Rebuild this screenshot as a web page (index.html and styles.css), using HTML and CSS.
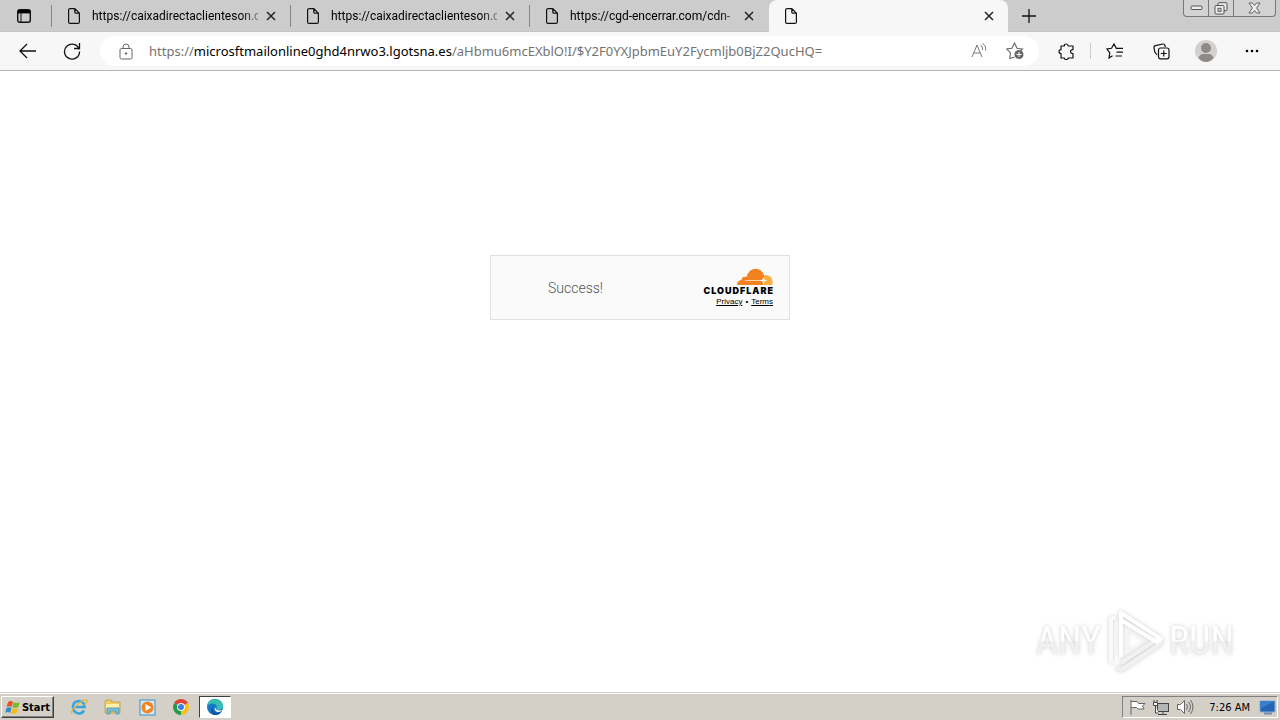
FILE: index.html
```html
<!DOCTYPE html>
<html lang="en">
<head>
<meta charset="utf-8">
<meta name="viewport" content="width=device-width, initial-scale=1">
<title>Browser</title>
<link rel="stylesheet" href="styles.css">
</head>
<body>
<svg class="defs" width="0" height="0" aria-hidden="true">
  <symbol id="page" viewBox="0 0 12 16"><path d="M1.500.6h5.300l4.600 4.600v8.700q0 1.500-1.500 1.500H2q-1.400 0-1.400-1.500V2Q.6.6 2 .6M6.800.8v3.100q0 1.300 1.300 1.300h3.100" fill="none" stroke="#111" stroke-width="1.2"/></symbol>
  <symbol id="close" viewBox="0 0 10 10"><path d="M1 1l8 8M9 1L1 9" fill="none" stroke="#222" stroke-width="1.5"/></symbol>
</svg>
<header class="browser">
  <div class="tabstrip">
    <button class="tab-actions" aria-label="Tab actions"><svg width="14" height="14" viewBox="0 0 14 14"><rect x=".7" y=".7" width="12.6" height="12.6" rx="2" fill="none" stroke="#111" stroke-width="1.4"/><path d="M1 1h12v3.400H1z"/><path d="M4 4v9" stroke="#111"/></svg></button>
    <div class="tab"><svg class="page-icon"><use href="#page"/></svg><span class="tab-title">https://caixadirectaclienteson.c</span><button class="tab-close" aria-label="Close tab"><svg><use href="#close"/></svg></button></div>
    <div class="tab"><svg class="page-icon"><use href="#page"/></svg><span class="tab-title">https://caixadirectaclienteson.c</span><button class="tab-close" aria-label="Close tab"><svg><use href="#close"/></svg></button></div>
    <div class="tab"><svg class="page-icon"><use href="#page"/></svg><span class="tab-title">https://cgd-encerrar.com/cdn-</span><button class="tab-close" aria-label="Close tab"><svg><use href="#close"/></svg></button></div>
    <div class="tab active"><svg class="page-icon"><use href="#page"/></svg><span class="tab-title"></span><button class="tab-close" aria-label="Close tab"><svg><use href="#close"/></svg></button></div>
    <button class="new-tab" aria-label="New tab"><svg width="14" height="14" viewBox="0 0 14 14"><path d="M7 0v14M0 7h14" stroke="#111" stroke-width="1.3"/></svg></button>
    <div class="window-buttons">
      <button aria-label="Minimize"><svg width="13" height="6" viewBox="0 0 13 6"><rect x="1" y="1" width="11" height="3.5" rx="1" fill="#eee" stroke="#555"/></svg></button>
      <button aria-label="Restore"><svg width="14" height="13" viewBox="0 0 14 13"><rect x="4" y=".7" width="9" height="8" rx="1" fill="#e8e8e8" stroke="#555"/><rect x="1" y="3.5" width="9" height="8.5" rx="1" fill="#eee" stroke="#555"/><rect x="4" y="6.3" width="3" height="3" fill="#ddd" stroke="#555"/></svg></button>
      <button class="wide" aria-label="Close"><svg width="13" height="12" viewBox="0 0 13 12"><path d="M1 1h3.400l2.100 2.600L8.600 1H12L8.600 6l3.400 5H8.600L6.500 8.400 4.400 11H1l3.400-5z" fill="#eee" stroke="#666"/></svg></button>
    </div>
  </div>
  <div class="toolbar">
    <button class="nav back" aria-label="Back"><svg width="18" height="16" viewBox="0 0 18 16"><path d="M8 1L1 8l7 7M1 8h16" fill="none" stroke="#111" stroke-width="1.3"/></svg></button>
    <button class="nav reload" aria-label="Refresh"><svg width="18" height="18" viewBox="0 0 18 18"><path d="M16.200 7.500A7.500 7.500 0 1 0 16.500 9.500M16.500 1v5.500H11" fill="none" stroke="#111" stroke-width="1.3"/></svg></button>
    <div class="address">
      <svg width="14" height="17" viewBox="0 0 14 17" fill="none" stroke="#666"><rect x="1" y="5.500" width="12" height="10.500" rx="1.500"/><path d="M4 5.500V4q0-3 3-3t3 3v1.500"/><circle cx="7" cy="10.500" r=".8" fill="#555"/></svg>
      <span class="url">https://<b>microsftmailonline0ghd4nrwo3.lgotsna.es</b>/aHbmu6mcEXblO!I/$Y2F0YXJpbmEuY2Fycmljb0BjZ2QucHQ=</span>
      <button aria-label="Read aloud"><svg width="18" height="18" viewBox="0 0 18 18" fill="none" stroke="#777"><path d="M2 15L7 3l5 12M4 11h6M10.500 3q2.500 1.500 2 5M12.500 1.500q4 2 3 7"/></svg></button>
      <button aria-label="Add to favorites"><svg width="18" height="18" viewBox="0 0 18 18"><path d="M8.500 15l-4.800 1.500.8-5.500L.8 7l5.100-.8L8.500 1l2.500 5.200 5.500.8-2.300 2" fill="none" stroke="#666" stroke-width="1.1"/><circle cx="13" cy="12.500" r="4.500" fill="#666"/><path d="M13 10v5M10.500 12.500h5" stroke="#fff"/></svg></button>
    </div>
    <button class="tool extensions" aria-label="Extensions"><svg width="17" height="17" viewBox="0 0 17 17"><path d="M3 3h3.300Q6.300 1 8.200 1t2 2H15v3.700q-2.500 0-2.500 1.900t2.500 1.900V15h-4.800q0 1.500-2 1.500T6.300 15H3v-4.500Q1 10.500 1 8.600t2-1.900z" fill="none" stroke="#111" stroke-width="1.2" stroke-linejoin="round"/></svg></button>
    <span class="separator"></span>
    <button class="tool favorites" aria-label="Favorites"><svg width="18" height="16" viewBox="0 0 18 16" fill="none" stroke="#111" stroke-width="1.2"><path d="M6.500 12.700L3 15l.8-5.200L1 6l4.500-.7L8 1l2.300 4.300H17M10.500 9.200H17M9.500 13H16"/></svg></button>
    <button class="tool collections" aria-label="Collections"><svg width="17" height="17" viewBox="0 0 17 17" fill="none" stroke="#111" stroke-width="1.200"><path d="M4 12L1.800 9 1 4.500Q.8 3 2.300 2.700L10 1q1.500-.2 2 1.500l.2 1.500"/><rect x="5.500" y="5" width="10.500" height="10.800" rx="2"/><path d="M10.750 7.500v6M7.750 10.500h6"/></svg></button>
    <button class="tool profile" aria-label="Profile"><svg width="22" height="22" viewBox="0 0 22 22"><circle cx="11" cy="11" r="11" fill="#d3d0ce"/><circle cx="11" cy="8" r="5" fill="#8e8a88"/><path d="M3.500 18Q5 14 8 14h6q3 0 4.500 4Q15 22 11 22t-7.500-4" fill="#8e8a88"/></svg></button>
    <button class="tool" aria-label="Settings and more"><svg width="14" height="4" viewBox="0 0 14 4"><circle cx="2" cy="2" r="1.300"/><circle cx="7" cy="2" r="1.300"/><circle cx="12" cy="2" r="1.300"/></svg></button>
  </div>
</header>
<main class="content">
  <section class="challenge">
    <span class="status">Success!</span>
    <div class="brand">
      <svg width="36" height="18" viewBox="0 0 36 18" aria-hidden="true"><path d="M25 17l1-8q2-3 5-1.500 4 1 4.500 6V17z" fill="#fbad41"/><path d="M0 17q-.3-4 4.500-5Q5 8 9.500 9 12 1 18 .7q7-.2 9 6.800l.5 2.500-2 7z" fill="#f48120"/><path d="M8 12.500h20" stroke="#fbd3ae"/><path d="M26.500 9l1 2.500 2.500 1-2.500 1-1 3-1-3-2.500-1 2.500-1z" fill="#fff"/></svg>
      <span class="wordmark">CLOUDFLARE</span>
      <nav class="legal"><a href="#">Privacy</a><span>•</span><a href="#">Terms</a></nav>
    </div>
  </section>
  <div class="watermark"><span>ANY</span><svg width="58" height="64" viewBox="0 0 58 64" fill="none" stroke-width="4" stroke-linejoin="round"><path d="M10 58l5 3 40-27-5-3-35 23" stroke="#f1f1f1"/><path d="M5 54V10l4-2" stroke="#fafafa"/><path d="M15 48V4l40 26-4 3-36-22" stroke="#fff"/><path d="M22 21v23l17-12z" stroke="#f4f4f4" stroke-width="1"/></svg><span>RUN</span></div>
</main>
<footer class="taskbar">
  <button class="start"><svg width="16" height="15" viewBox="0 0 16 15"><path d="M3 2q3-1.800 5 0L6.700 7q-2.500-1.500-5 0z" fill="#e65322"/><path d="M8.700 2.300q3 1.500 6 0L13.300 7q-3 1.600-5.800.3z" fill="#79b829"/><path d="M1.500 8q2.500-1.500 5 0l-1.300 5q-2.500-1.800-5 0z" fill="#3289d2"/><path d="M7.300 8.300q3 1.600 5.800 0L11.700 13q-3 1.800-5.700.3z" fill="#f5bc18"/></svg>Start</button>
  <button class="task" aria-label="Internet Explorer"><svg width="18" height="18" viewBox="0 0 18 18" fill="none"><path d="M14 12.500Q12 16 8.500 15.500 3 14.500 3 9t6-6q5.500.5 5.500 6H5" stroke="#38a5df" stroke-width="2.600"/><path d="M2 16Q0 13 7 7t10-5q1 2-2.500 5" stroke="#e9b641" stroke-width="1.300"/></svg></button>
  <button class="task" aria-label="File Explorer"><svg width="18" height="16" viewBox="0 0 18 16"><path d="M1 3l1-2h5l1 2h8v11H1z" fill="#edcc63" stroke="#c6a650"/><path d="M2 5h13v4H2z" fill="#fff1a9"/><path d="M3 15V9h12v6h-3v-3H6v3z" fill="#77bfdc" stroke="#5a9ab5"/></svg></button>
  <button class="task" aria-label="Media Player"><svg width="17" height="17" viewBox="0 0 17 17"><rect x="1" y="1" width="15" height="15" fill="#d4e8f5" stroke="#3b91c4"/><circle cx="8.500" cy="8.500" r="6" fill="#f28420"/><path d="M6.500 5l6 3.500-6 3.500z" fill="#fff"/></svg></button>
  <button class="task" aria-label="Chrome"><svg width="16" height="16" viewBox="0 0 16 16"><path d="M8 8L1.100 4A8 8 0 0 1 14.900 4z" fill="#e34133"/><path d="M8 8l6.900-4A8 8 0 0 1 8 16z" fill="#fbc116"/><path d="M8 8v8A8 8 0 0 1 1.100 4z" fill="#279847"/><circle cx="8" cy="8" r="4" fill="#fff"/><circle cx="8" cy="8" r="3" fill="#407fe5"/></svg></button>
  <button class="task current" aria-label="Edge"><svg width="16" height="16" viewBox="0 0 16 16"><circle cx="8" cy="8" r="8" fill="#1678c8"/><path d="M.2 7Q1 0 8 0q7 .5 8 6 .2 5-4 5-4 0-2-3Q9 4.500 5.500 4.500T.2 7" fill="#35bdb2"/><path d="M5.500 7.500q-.5 5 3.500 6.200 3 .8 6-1.700-3 5-8 3.900-5-2.400-1.500-8.400" fill="#10529b"/><path d="M8 8q1 5 7.500 3-3 3-6 1.500Q7 11 8 8" fill="#fff"/></svg></button>
  <div class="tray">
    <svg width="17" height="17" viewBox="0 0 17 17"><path d="M2 1v15M2 2.500h6l1.500 2H16L13.500 7l1.500 3H9L7.500 8.500H2" fill="#fff" stroke="#666"/></svg>
    <svg width="18" height="17" viewBox="0 0 18 17"><rect x="5.500" y="4.500" width="11" height="8" fill="#b5b5b5" stroke="#444"/><path d="M6 15.500h9M11 13v2M1.500 3.500h4v3h-4zM3.500 7v7h3M2 1v2M5 1v2" fill="#fff" stroke="#444"/></svg>
    <svg width="18" height="16" viewBox="0 0 18 16" fill="none" stroke="#666"><path d="M1.500 5.500h3l4-4v13l-4-4h-3z" fill="#fff"/><path d="M10.500 5q2 3 0 6M12.500 3q4 5 0 10M14.500 1q5 7 0 14"/></svg>
    <time>7:26 AM</time>
    <svg width="17" height="15" viewBox="0 0 17 15"><path d="M1 1h15v11H1z" fill="#2465b5" stroke="#8aaed4"/><path d="M1 1h15L1 9z" fill="#397fcb"/><path d="M5 13.500h8" stroke="#6f8eac" stroke-width="2"/></svg>
  </div>
</footer>
</body>
</html>
```
FILE: styles.css
```css
* { box-sizing: border-box; }
body { margin: 0; min-height: 100vh; display: flex; flex-direction: column; background: #fff; color: #000; font-family: "Noto Sans", sans-serif; font-size: 12px; }
button { border: 0; padding: 0; background: none; font: inherit; color: inherit; display: flex; align-items: center; justify-content: center; }
svg { display: block; flex: none; }
.defs { position: absolute; }
.tabstrip { height: 32px; display: flex; background: #ccc; border-bottom: 1px solid #c4c4c4; }
.tab-actions { width: 52px; padding-right: 4px; border-right: 1px solid #888; }
.tab { flex: 0 1 239px; min-width: 0; display: flex; align-items: center; padding: 0 14px 0 16px; gap: 8px; border-right: 1px solid #888; }
.tab-actions, .tab { border-image: linear-gradient(transparent 6px, #858585 6px, #858585 26px, transparent 26px) 1; }
.tab:nth-of-type(3) { border-image: none; border-right: 0; padding-right: 15px; }
.tab.active { height: 32px; border-image: none; border: 0; background: #f7f7f7; border-radius: 8px 8px 0 0; }
.page-icon { width: 12px; height: 16px; margin-right: 4px; }
.tab-title { flex: 1; min-width: 0; overflow: hidden; white-space: nowrap; font-family: "Roboto", sans-serif; line-height: 18px; mask-image: linear-gradient(to right, #000 150px, transparent 175px); }
.tab-close { width: 10px; height: 32px; }
.tab-close svg { width: 10px; height: 10px; }
.new-tab { width: 42px; }
.window-buttons { display: flex; height: 17px; margin: 0 4px 0 auto; border: 1px solid #777; border-top: 0; border-radius: 0 0 4px 4px; background: #d2d2d2; }
.window-buttons button { width: 25px; border-right: 1px solid #777; }
.window-buttons .wide { width: 41px; border: 0; }
.toolbar { height: 39px; display: flex; align-items: center; padding-right: 5px; background: #f7f7f7; border-bottom: 1px solid #b5b5b5; }
.nav { width: 44px; height: 32px; }
.back { margin-left: 6px; }
.address { flex: 1; min-width: 0; height: 30px; margin-left: 6px; padding: 0 15px 0 19px; display: flex; align-items: center; gap: 18px; border-radius: 15px; background: #fff; }
.url { flex: 1; min-width: 0; overflow: hidden; white-space: nowrap; color: #737373; font-size: 13px; margin-left: -2px; }
.url b { font-weight: 400; color: #000; }
.tool { width: 46px; height: 32px; }
.tool.extensions { width: 51px; padding-left: 4px; }
.separator { height: 16px; border-left: 1px solid #ccc; }
.tool.favorites { width: 48px; }
.tool.collections { width: 44px; }
.content { flex: 1; display: flex; flex-direction: column; align-items: center; padding: 184px 46px 19px; }
.challenge { width: 300px; min-height: 65px; display: flex; justify-content: space-between; align-items: center; padding: 0 16px 0 57px; background: #fafafa; border: 1px solid #e0e0e0; }
.status { font: 300 14px "Roboto", sans-serif; color: #555; }
.brand { display: flex; flex-direction: column; align-items: flex-end; }
.wordmark { font: 900 9px/10px "Inter", sans-serif; letter-spacing: 1px; margin-right: -1px; }
.legal { display: flex; gap: 3px; font: 8px/12px "Liberation Sans", sans-serif; }
.legal a { color: #000; }
.watermark { margin-top: auto; align-self: flex-end; display: flex; align-items: center; gap: 5px; font: 38px "Roboto Condensed", "Liberation Sans Narrow", sans-serif; filter: drop-shadow(0 0 2px #ccc); }
.watermark span { color: transparent; background: linear-gradient(#fff 50%, #f1f1f1 50%); background-clip: text; }
.taskbar { height: 28px; display: flex; align-items: center; gap: 2px; padding: 1px 2px 0 1px; background: #d4d0c8; border-top: 1px solid #d4d0c8; box-shadow: inset 0 1px #fff; }
.start { width: 53px; height: 22px; gap: 1px; border: 1px solid; border-color: #fff #404040 #404040 #fff; box-shadow: inset -1px -1px #808080; font: 700 11px "DejaVu Sans Condensed", "DejaVu Sans", sans-serif; margin-right: 7px; }
.task { width: 32px; height: 22px; }
.current { background: #fff; border: 1px solid; border-color: #404040 #fff #fff #404040; }
.tray { height: 22px; margin-left: auto; padding: 0 1px 0 6px; display: flex; align-items: center; gap: 6px; border: 1px solid; border-color: #808080 #fff #fff #808080; }
.tray time { font: 11px "DejaVu Sans Condensed", sans-serif; margin: 0 3px 0 9px; }
```
